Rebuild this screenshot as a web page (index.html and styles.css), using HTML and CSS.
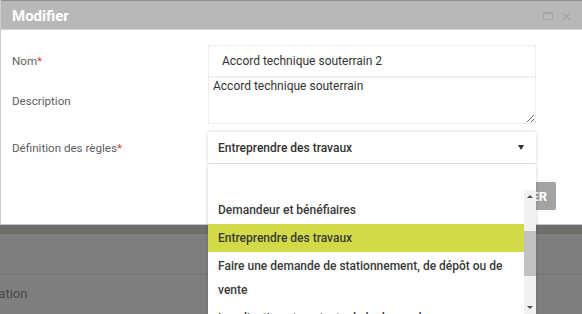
FILE: index.html
```html
<!DOCTYPE html>
<html lang="fr">
<head>
  <meta charset="UTF-8">
  <title>Modifier</title>
  <link rel="stylesheet" href="styles.css">
</head>
<body>
  <div class="dialog">
    <div class="titlebar">
      <span class="title">Modifier</span>
      <div class="win-buttons">
        <svg width="10" height="8" viewBox="0 0 10 8"><rect x="0.5" y="0.5" width="9" height="7" fill="none" stroke="#a6a6a6"/><line x1="0" y1="1.5" x2="10" y2="1.5" stroke="#a6a6a6"/></svg>
        <svg width="9" height="9" viewBox="0 0 9 9"><path d="M1 1 L8 8 M8 1 L1 8" stroke="#a6a6a6" stroke-width="1.4"/></svg>
      </div>
    </div>
    <div class="dialog-body">
      <form class="form-grid">
        <label class="form-label">Nom<span class="req">*</span></label>
        <input class="field field-input" type="text" value="Accord technique souterrain 2">

        <label class="form-label">Description</label>
        <textarea class="field field-area">Accord technique souterrain</textarea>

        <label class="form-label label-rules">Définition des règles<span class="req">*</span></label>
        <div class="select-wrap">
          <div class="select-box">
            <span>Entreprendre des travaux</span>
            <span class="caret"></span>
          </div>
          <div class="select-menu">
            <div class="menu-blank"></div>
            <div class="menu-scroll">
              <ul class="menu-list">
                <li class="menu-item">Demandeur et bénéfiaires</li>
                <li class="menu-item active">Entreprendre des travaux</li>
                <li class="menu-item multi">Faire une demande de stationnement, de dépôt ou de vente</li>
                <li class="menu-item">Localisation et contexte de la demande</li>
              </ul>
              <div class="scrollbar">
                <span class="arrow up"></span>
                <div class="track"><div class="thumb"></div></div>
                <span class="arrow down"></span>
              </div>
            </div>
          </div>
        </div>
      </form>
      <div class="dialog-footer">
        <button class="save-button" type="button">ENREGISTRER</button>
      </div>
    </div>
  </div>
  <div class="page-behind">
    <div class="behind-band"></div>
    <div class="behind-row"></div>
    <div class="behind-row behind-text">Localisation</div>
  </div>
</body>
</html>
```

FILE: styles.css
```css
body {
  margin: 0;
  width: 582px;
  height: 314px;
  overflow: hidden;
  background-color: #7f7f7f;
  font-family: Roboto, 'Liberation Sans', sans-serif;
  color: #333;
}
.dialog {
  background: white;
  border-left: 1px solid #cfcfcf;
}
.titlebar {
  height: 28px;
  display: flex;
  align-items: center;
  justify-content: space-between;
  padding: 0 11px 0 11px;
  background-color: #b8b8b8;
  border-top: 1px solid #8f8f8f;
  border-bottom: 1px solid #d4d4d4;
}
.title {
  color: white;
  font-size: 15px;
  font-weight: 700;
  margin-top: 1px;
}
.win-buttons {
  display: flex;
  align-items: center;
  gap: 9px;
  margin-top: 2px;
}
.win-buttons svg {
  display: block;
}
.dialog-body {
  padding: 15px 46px 14px 11px;
}
.form-grid {
  display: grid;
  grid-template-columns: 196px 328px;
  align-items: center;
  margin: 0;
}
.form-label {
  font-size: 11.6px;
  color: #606060;
}
.req {
  color: #e53935;
}
.field {
  box-sizing: border-box;
  width: 328px;
  margin: 0;
  border: 1px solid #eeeeee;
  font-family: Roboto, 'Liberation Sans', sans-serif;
  font-size: 12px;
  color: #333;
  background: white;
  outline: none;
}
.field-input {
  height: 32px;
  padding: 0 13px;
}
.field-area {
  height: 47px;
  padding: 1px 4px;
  resize: vertical;
  display: block;
}
.label-rules {
  margin-top: 8px;
}
.select-wrap {
  position: relative;
  margin-top: 8px;
}
.select-box {
  height: 31px;
  display: flex;
  align-items: center;
  justify-content: space-between;
  padding: 0 12px 0 10px;
  font-size: 12px;
  font-weight: 500;
  color: #333;
  box-shadow: 0 0 4px rgba(0, 0, 0, 0.18);
  border-bottom: 1px solid #e4e4e4;
}
.caret {
  width: 0;
  height: 0;
  border-left: 3.5px solid transparent;
  border-right: 3.5px solid transparent;
  border-top: 5px solid #333;
}
.select-menu {
  position: absolute;
  top: 32px;
  left: 0;
  width: 328px;
  background: white;
  box-shadow: 0 2px 4px rgba(0, 0, 0, 0.2);
  z-index: 5;
}
.menu-blank {
  height: 26px;
}
.menu-scroll {
  display: flex;
  height: 124px;
  overflow: hidden;
}
.menu-list {
  list-style: none;
  margin: 0;
  padding: 6px 0 0 0;
  flex: 1;
}
.menu-item {
  padding: 0 10px;
  line-height: 28px;
  font-size: 12px;
  font-weight: 500;
  color: #3a3a3a;
}
.menu-item.multi {
  line-height: 24px;
  padding-top: 2px;
  padding-bottom: 2px;
}
.menu-item.active {
  background-color: #d3da48;
}
.scrollbar {
  width: 12px;
  display: flex;
  flex-direction: column;
  align-items: center;
  background: #f1f1f1;
}
.arrow {
  width: 0;
  height: 0;
  border-left: 3px solid transparent;
  border-right: 3px solid transparent;
  margin: 5px 0;
}
.arrow.up {
  border-bottom: 3px solid #505050;
}
.arrow.down {
  border-top: 3px solid #505050;
}
.track {
  flex: 1;
  width: 100%;
  padding-top: 28px;
}
.thumb {
  height: 45px;
  background: #c1c1c1;
}
.dialog-footer {
  display: flex;
  justify-content: flex-end;
  margin-top: 18px;
  margin-right: -20px;
}
.save-button {
  height: 28px;
  padding: 0 9px;
  background-color: #a3a3a3;
  color: white;
  font-family: Roboto, 'Liberation Sans', sans-serif;
  font-size: 13px;
  font-weight: 700;
  border: none;
  border-radius: 2px;
}
.page-behind {
  border-top: 1px solid #c8c8c8;
}
.behind-band {
  height: 8px;
  background-color: #6d6d6d;
  border-bottom: 1px solid #6f704f;
}
.behind-row {
  height: 40px;
  border-bottom: 1px solid #747474;
}
.behind-text {
  border-bottom: none;
  margin-left: -43px;
  padding-top: 11px;
  font-size: 13px;
  color: #484848;
}
```
